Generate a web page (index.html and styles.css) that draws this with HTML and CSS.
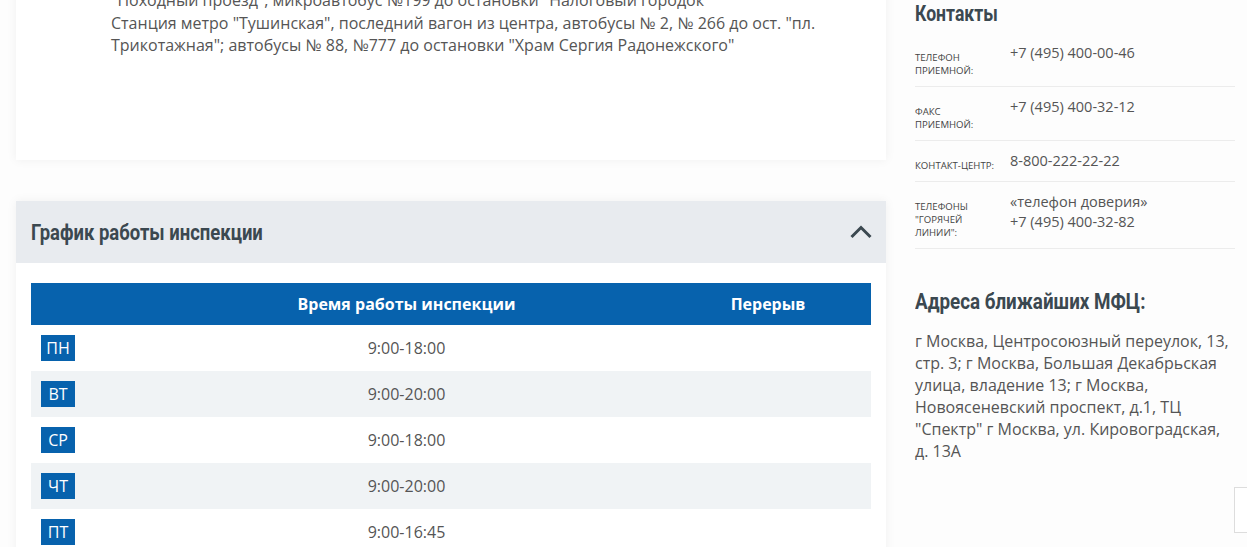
FILE: index.html
```html
<!DOCTYPE html>
<html lang="ru">
<head>
<meta charset="utf-8">
<title>Инспекция</title>
<link rel="stylesheet" href="styles.css">
</head>
<body>
<div class="page">
  <main class="main">
    <section class="card route">
      <p class="route-text">"Походный проезд", микроавтобус №199 до остановки "Налоговый городок"<br>Станция метро "Тушинская", последний вагон из центра, автобусы № 2, № 266 до ост. "пл. Трикотажная"; автобусы № 88, №777 до остановки "Храм Сергия Радонежского"</p>
    </section>
    <section class="card schedule">
      <header class="sched-head">
        <h2 class="sched-title">График работы инспекции</h2>
        <svg class="chevron" width="22" height="14" viewBox="0 0 22 14"><polyline points="1.5,12 11,2.5 20.5,12" fill="none" stroke="#3b4850" stroke-width="3"/></svg>
      </header>
      <div class="table">
        <div class="row head">
          <div class="c-day"></div>
          <div class="c-time">Время работы инспекции</div>
          <div class="c-break">Перерыв</div>
        </div>
        <div class="row">
          <div class="c-day"><span class="badge">ПН</span></div>
          <div class="c-time">9:00-18:00</div>
          <div class="c-break"></div>
        </div>
        <div class="row alt">
          <div class="c-day"><span class="badge">ВТ</span></div>
          <div class="c-time">9:00-20:00</div>
          <div class="c-break"></div>
        </div>
        <div class="row">
          <div class="c-day"><span class="badge">СР</span></div>
          <div class="c-time">9:00-18:00</div>
          <div class="c-break"></div>
        </div>
        <div class="row alt">
          <div class="c-day"><span class="badge">ЧТ</span></div>
          <div class="c-time">9:00-20:00</div>
          <div class="c-break"></div>
        </div>
        <div class="row">
          <div class="c-day"><span class="badge">ПТ</span></div>
          <div class="c-time">9:00-16:45</div>
          <div class="c-break"></div>
        </div>
      </div>
    </section>
  </main>
  <aside class="side">
    <h3 class="side-title contacts">Контакты</h3>
    <div class="contact">
      <div class="c-label">Телефон<br>приемной:</div>
      <div class="c-value">+7 (495) 400-00-46</div>
    </div>
    <div class="contact">
      <div class="c-label">Факс<br>приемной:</div>
      <div class="c-value">+7 (495) 400-32-12</div>
    </div>
    <div class="contact">
      <div class="c-label">Контакт-центр:</div>
      <div class="c-value">8-800-222-22-22</div>
    </div>
    <div class="contact">
      <div class="c-label">Телефоны<br>"горячей<br>линии":</div>
      <div class="c-value">«телефон доверия»<br>+7 (495) 400-32-82</div>
    </div>
    <h3 class="side-title mfc">Адреса ближайших МФЦ:</h3>
    <p class="mfc-text">г Москва, Центросоюзный переулок, 13, стр. 3; г Москва, Большая Декабрьская улица, владение 13; г Москва, Новоясеневский проспект, д.1, ТЦ "Спектр" г Москва, ул. Кировоградская, д. 13А</p>
  </aside>
</div>
<div class="totop"></div>
</body>
</html>
```
FILE: styles.css
```css
html, body {
  margin: 0;
  padding: 0;
  background: #fdfdfd;
  overflow: hidden;
}
body {
  font-family: "Open Sans", "Noto Sans", sans-serif;
  color: #555;
  height: 547px;
}
.page {
  display: flex;
  gap: 29px;
  padding-left: 16px;
  height: 547px;
  overflow: hidden;
}
.main {
  width: 870px;
  flex: none;
  display: flex;
  flex-direction: column;
  gap: 41px;
}
.card {
  background: #fff;
  box-shadow: 0 0 10px rgba(0, 0, 0, 0.06);
}
.route {
  margin-top: -31px;
  height: 191px;
  flex: none;
  box-sizing: border-box;
  padding: 20px 40px 0 95px;
}
.route-text {
  margin: 0;
  font-size: 16px;
  line-height: 22.5px;
  color: #555;
}
.schedule {
  padding-bottom: 20px;
  flex: none;
}
.sched-head {
  background: #e8ebef;
  height: 62px;
  display: flex;
  align-items: center;
  justify-content: space-between;
  padding: 0 14px 0 15px;
}
.sched-title {
  margin: 0;
  font-family: "Roboto", "Liberation Sans", sans-serif;
  font-weight: bold;
  font-size: 22px;
  color: #3b4850;
  transform: scaleX(0.84);
  transform-origin: left center;
  white-space: nowrap;
}
.chevron {
  display: block;
  margin-top: -1px;
}
.table {
  margin: 20px 15px 0;
}
.row {
  display: grid;
  grid-template-columns: 117px 517px 206px;
  height: 46px;
  align-items: center;
  font-size: 16px;
  color: #555;
}
.row.head {
  background: #0762ad;
  height: 42px;
  color: #fff;
  font-weight: bold;
}
.row.alt {
  background: #f0f3f5;
}
.c-time, .c-break {
  text-align: center;
}
.c-day {
  padding-left: 10px;
}
.badge {
  display: block;
  background: #0762ad;
  color: #fff;
  width: 34px;
  height: 26px;
  line-height: 26px;
  text-align: center;
  font-size: 16px;
}
.side {
  width: 320px;
  flex: none;
}
.side-title {
  margin: 0 0 5px;
  font-family: "Roboto", "Liberation Sans", sans-serif;
  font-weight: bold;
  font-size: 22px;
  color: #3b4850;
  line-height: 28px;
  transform-origin: left center;
  white-space: nowrap;
}
.side-title.contacts {
  transform: scaleX(0.8);
}
.contact {
  display: flex;
  border-bottom: 1px solid #ececec;
  padding: 10px 0 9.5px;
}
.c-label {
  width: 95px;
  flex: none;
  font-size: 9.6px;
  line-height: 13px;
  text-transform: uppercase;
  color: #444;
  padding-top: 7.5px;
}
.c-value {
  font-size: 14.5px;
  line-height: 20px;
  color: #555;
}
.side-title.mfc {
  margin-top: 39px;
  margin-bottom: 0;
  transform: scaleX(0.855);
}
.mfc-text {
  margin: 14px 0 0;
  font-size: 16px;
  line-height: 22px;
  color: #555;
}
.totop {
  position: absolute;
  left: 1234px;
  top: 487px;
  width: 40px;
  height: 44px;
  border: 1px solid #ddd;
  background: #fff;
}
```
